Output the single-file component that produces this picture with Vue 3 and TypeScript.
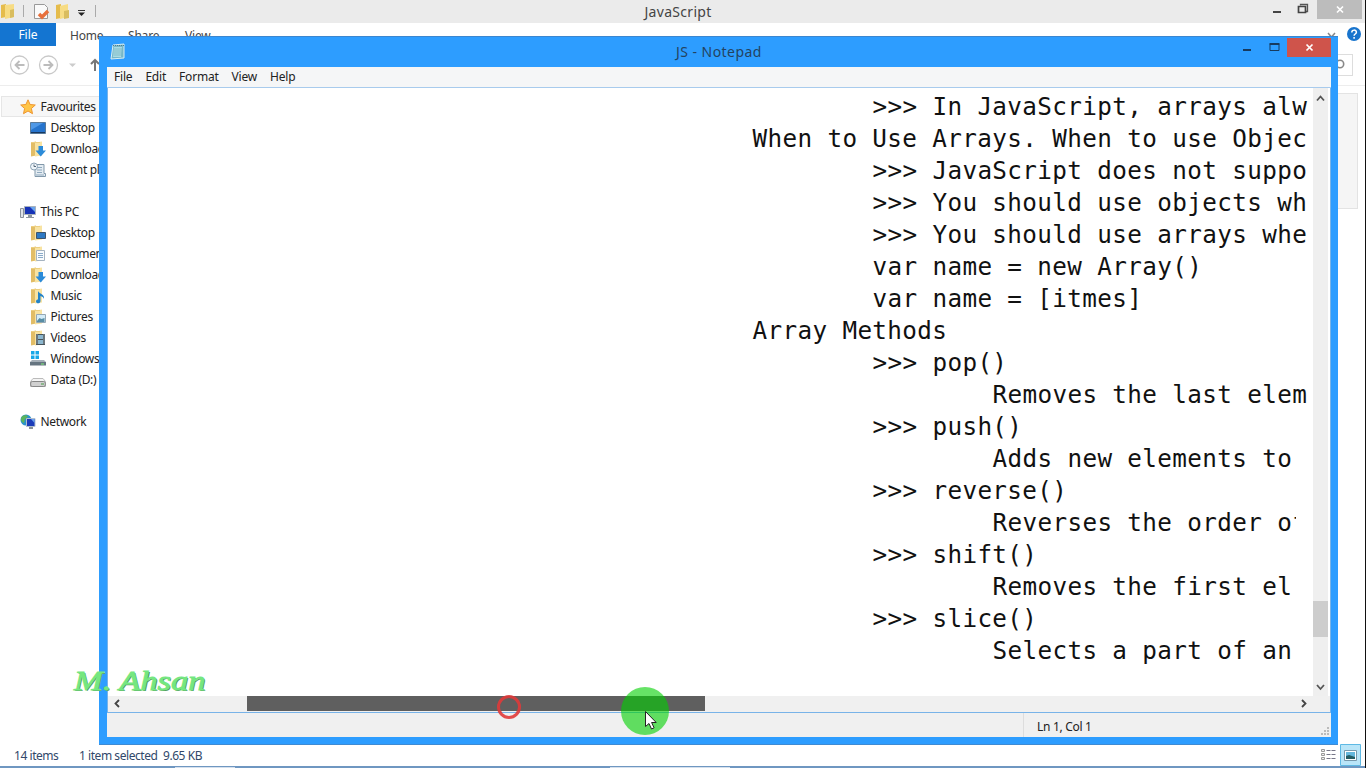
<script setup lang="ts">
interface NavItem {
  label: string
  icon: string
  root?: boolean
  gap?: boolean
  active?: boolean
}
interface Line {
  indent: number
  text: string
  narrow?: boolean
}

const nav: NavItem[] = [
  { label: 'Favourites', icon: 'star', root: true, active: true },
  { label: 'Desktop', icon: 'screen' },
  { label: 'Downloads', icon: 'download' },
  { label: 'Recent places', icon: 'recent' },
  { label: 'This PC', icon: 'pc', root: true, gap: true },
  { label: 'Desktop', icon: 'fdesktop' },
  { label: 'Documents', icon: 'document' },
  { label: 'Downloads', icon: 'download' },
  { label: 'Music', icon: 'music' },
  { label: 'Pictures', icon: 'picture' },
  { label: 'Videos', icon: 'video' },
  { label: 'Windows (C:)', icon: 'windrive' },
  { label: 'Data (D:)', icon: 'drive' },
  { label: 'Network', icon: 'network', root: true, gap: true },
]
const folderIcons = ['download', 'fdesktop', 'document', 'music', 'picture', 'video']

const lines: Line[] = [
  { indent: 1, text: '>>> In JavaScript, arrays alw' },
  { indent: 0, text: 'When to Use Arrays. When to use Objec' },
  { indent: 1, text: '>>> JavaScript does not suppo' },
  { indent: 1, text: '>>> You should use objects wh' },
  { indent: 1, text: '>>> You should use arrays whe' },
  { indent: 1, text: 'var name = new Array()' },
  { indent: 1, text: 'var name = [itmes]' },
  { indent: 0, text: 'Array Methods' },
  { indent: 1, text: '>>> pop()' },
  { indent: 2, text: 'Removes the last elem' },
  { indent: 1, text: '>>> push()' },
  { indent: 2, text: 'Adds new elements to' },
  { indent: 1, text: '>>> reverse()' },
  { indent: 2, text: 'Reverses the order of', narrow: true },
  { indent: 1, text: '>>> shift()' },
  { indent: 2, text: 'Removes the first el' },
  { indent: 1, text: '>>> slice()' },
  { indent: 2, text: 'Selects a part of an' },
]
</script>

<template>
  <div class="desktop">
    <section class="explorer">
      <header class="ex-title">
        <svg class="quick" width="100" height="23" viewBox="0 0 100 23">
          <path d="M1 5l5-1v13l-5 1z" fill="#e5bc4c" /><path d="M5 5l9-1v13l-9 2z" fill="#f7dc83" /><path d="M10 10l4-1v8l-4 1z" fill="#d9bd5f" />
          <path d="M23.500 5v12M95.500 5v12" stroke="#aaa" />
          <path d="M34.500 4.500h10l3 3v11h-13z" fill="#fafafa" stroke="#999" /><path d="M39 14l3 3 6-6" fill="none" stroke="#e8703c" stroke-width="3.500" />
          <path d="M56 5l5-1v14l-5 1z" fill="#e5bc4c" /><path d="M60 6l8-2v13l-8 2z" fill="#f7dc83" /><path d="M64 11l5-1v8l-5 1z" fill="#d9bd5f" />
          <path d="M78 10.500h7" stroke="#333" /><path d="M78 12.500h7l-3.500 3.500z" fill="#222" />
        </svg>
        <span class="ex-name">JavaScript</span>
        <svg class="ex-controls" width="100" height="23" viewBox="0 0 100 23">
          <path d="M7 12h8" stroke="#444" stroke-width="2" />
          <path d="M34.500 5.500v-1h7v7h-2" fill="none" stroke="#555" stroke-width="1.300" /><path d="M32.500 6.500h7v6h-7z" fill="none" stroke="#444" stroke-width="1.700" />
          <path d="M51 0h45v19H51z" fill="#bcbcbc" /><path d="M71 6.500l6 6M77 6.500l-6 6" stroke="#fff" stroke-width="1.700" />
        </svg>
      </header>
      <nav class="ex-tabs">
        <span class="file">File</span><span class="tab home">Home</span><span class="tab share">Share</span><span class="tab view">View</span>
        <svg class="help" width="40" height="23" viewBox="0 0 40 23">
          <path d="M3 10l3.500 4 3.500-4" fill="none" stroke="#888" stroke-width="1.500" />
          <circle cx="29" cy="11" r="7" fill="#1874cd" /><path d="M26.800 9.400c0-3 4.600-3 4.600-.2 0 1.800-2.300 1.800-2.300 3.500M29.100 14v1.700" fill="none" stroke="#fff" stroke-width="1.500" />
        </svg>
      </nav>
      <div class="ex-address">
        <svg width="100" height="39" viewBox="0 0 100 39">
          <g fill="none" stroke="#c9c9c9" stroke-width="1.300"><circle cx="19.500" cy="19" r="9" /><circle cx="48.500" cy="19" r="9" /></g>
          <path d="M24.500 19h-9m4-4l-4 4 4 4M43.500 19h9m-4-4l4 4-4 4" fill="none" stroke="#bcbcbc" stroke-width="1.800" />
          <path d="M69 17.500h7l-3.500 3.500z" fill="#ccc" /><path d="M95 25V14m-4 4l4-4 4 4" fill="none" stroke="#777" stroke-width="2" />
        </svg>
        <div class="search"><svg width="12" height="14" viewBox="0 0 12 14"><circle cx="7" cy="5" r="3.700" fill="none" stroke="#888" stroke-width="1.600" /></svg></div>
      </div>
      <main class="ex-body">
        <ul class="tree">
          <li v-for="(item, i) in nav" :key="i" :class="{ root: item.root, gap: item.gap, active: item.active }">
            <svg width="16" height="16" viewBox="0 0 16 16">
              <template v-if="folderIcons.includes(item.icon)">
                <path d="M1 1.500l5-1v14l-5 1z" fill="#e2bd66" /><path d="M5 1.500l7-1v14l-7 1z" fill="#f8e3a2" /><path d="M1 1.500h9" stroke="#edcf80" />
              </template>
              <path v-if="item.icon === 'star'" d="M8 .8l2.100 4.700 5.200.5-3.900 3.500 1.100 5.200L8 12l-4.500 2.700 1.100-5.200L.7 6l5.200-.5z" fill="#ffc548" stroke="#ee9530" />
              <template v-else-if="item.icon === 'screen'">
                <path d="M.5 2.500h15v11H.5z" fill="#2674cd" stroke="#5a7a99" /><path d="M1 3h12L1 10z" fill="#4f98e6" /><path d="M1 12.500h14" stroke="#18385f" />
              </template>
              <path v-else-if="item.icon === 'download'" d="M8.500 5h4.500v4.500h3L10.700 15.500 5.500 9.500h3z" fill="#2b8bd9" />
              <template v-else-if="item.icon === 'recent'">
                <path d="M5 2.500h9v9h1.500v3H5z" fill="#e4ecf2" stroke="#8198aa" /><path d="M7 5.500h5M7 8h5M7 10.500h5M6 13h8" stroke="#8fa9be" /><circle cx="4" cy="4.500" r="3.500" fill="#eef5fa" stroke="#8ca2b5" /><path d="M4 2.500v2h2" fill="none" stroke="#567" />
              </template>
              <template v-else-if="item.icon === 'pc'">
                <path d="M.5 4.500h3v9h-3z" fill="#dfe3e8" stroke="#8b929c" /><path d="M4.500 2.500h11v8h-11z" fill="#1733b6" stroke="#a9b2bd" /><path d="M10 3h5v5z" fill="#6aa4ee" /><path d="M8 11h4v2h2v1H6v-1h2z" fill="#8d969f" />
              </template>
              <path v-else-if="item.icon === 'fdesktop'" d="M6.500 7.500h9v6h-9z" fill="#2e79c3" stroke="#40556a" />
              <template v-else-if="item.icon === 'document'">
                <path d="M6.500 4.500h8v10h-8z" fill="#f8fbfd" stroke="#a5b3c0" /><path d="M8 7.500h5M8 9.500h5M8 11.500h5" stroke="#8aabc9" />
              </template>
              <path v-else-if="item.icon === 'music'" d="M8 3c1 3 7 3 6 8-.5-2-2-2.500-3.500-3v5c0 3-4.500 3-4.500.5 0-1.500 1-2 2-2z" fill="#2383c9" />
              <template v-else-if="item.icon === 'picture'">
                <path d="M6.500 5.500h9v8h-9z" fill="#d4ecf8" stroke="#96a8b4" /><path d="M7 12l2.500-3 2 1 3-1v4H7z" fill="#588da5" />
              </template>
              <template v-else-if="item.icon === 'video'">
                <path d="M6 4h9v11H6z" fill="#46545c" /><path d="M8 5h5v4H8zM8 10h5v4H8z" fill="#8cb7cf" /><path d="M7 4.500v10M14 4.500v10" stroke="#ddd" stroke-dasharray="1 1" />
              </template>
              <template v-else-if="item.icon === 'windrive'">
                <path d="M1 0h3.500v3.500H1zM5.500 0H9v3.500H5.500zM1 4.500h3.500V8H1zM5.500 4.500H9V8H5.500z" fill="#18a8e8" /><path d="M2 9h12l2 2v3H0v-3z" fill="#a5afb8" /><path d="M0 11h16v3.500H0z" fill="#667581" /><path d="M11 13h3" stroke="#7ff078" />
              </template>
              <template v-else-if="item.icon === 'drive'">
                <path d="M3 6.500h10l2.500 3v5H.5v-5z" fill="#f4f4f4" stroke="#bbb" /><rect x=".7" y="9.500" width="14.600" height="5" rx="1.500" fill="#d0d0d0" stroke="#888" /><path d="M11 12h3" stroke="#4a9e4a" />
              </template>
              <template v-else-if="item.icon === 'network'">
                <circle cx="6" cy="6" r="5.500" fill="#2b91cb" /><path d="M2 2.500c3-2 5-1 6 0L5 5 4 9C1 8 0 5 2 2.500z" fill="#5bb45c" /><path d="M6.500 4.500h8.500v8H6.500z" fill="#1c3cb9" stroke="#b3bfce" /><path d="M11 5h3.500v4z" fill="#6aa4ee" /><path d="M9 13h4v2H9z" fill="#8a9299" />
              </template>
            </svg>
            <span>{{ item.label }}</span>
          </li>
        </ul>
        <div class="preview"></div>
      </main>
      <footer class="ex-status">
        <span class="count">14 items</span><span class="selected">1 item selected</span><span class="size">9.65 KB</span>
        <svg class="views" width="46" height="23" viewBox="0 0 46 23">
          <path d="M21.500 1.500h20v21h-20z" fill="#b9e5f8" stroke="#5eb9e4" />
          <path d="M2.500 6.500h3v2h-3zM2.500 10.500h3v2h-3zM2.500 14.500h3v2h-3z" fill="#eee" stroke="#999" /><path d="M7.500 7.500h4M12.500 7.500h4M7.500 11.500h4M12.500 11.500h4M7.500 15.500h4M12.500 15.500h4" stroke="#778" />
          <path d="M25.500 7.500h12v10h-12z" fill="#fff" stroke="#7799ac" /><path d="M27 9h9v7h-9z" fill="#65b7dc" /><path d="M27 13l3-1 6 2v2h-9z" fill="#255d64" />
        </svg>
      </footer>
      <div class="taskbar"><i></i><i></i></div>
    </section>

    <section class="notepad">
      <header class="np-title">
        <svg class="np-icon" width="16" height="17" viewBox="0 0 16 17">
          <path d="M3 2l11-1v14l-13 1z" fill="#77b7c8" stroke="#d9eef2" /><path d="M4 4h8l-1 10H3z" fill="#a9dce4" /><path d="M4 6h8M4 8h8M3.500 10H12M3.500 12H12" stroke="#73afbd" stroke-width=".7" /><path d="M3 2.500h11" stroke="#557d89" stroke-dasharray="1 1" />
        </svg>
        <span>JS - Notepad</span>
        <svg class="np-controls" width="92" height="21" viewBox="0 0 92 21">
          <path d="M4 13h8" stroke="#173a5e" stroke-width="2" /><path d="M31 7.500h9v6h-9z" fill="none" stroke="#173a5e" /><path d="M30.500 7h10" stroke="#173a5e" stroke-width="2" />
          <path d="M48 1h44v19H48z" fill="#cf544b" /><path d="M67.500 7.500l6 6M73.500 7.500l-6 6" stroke="#fff" stroke-width="1.700" />
        </svg>
      </header>
      <nav class="np-menu"><span>File</span><span>Edit</span><span>Format</span><span>View</span><span>Help</span></nav>
      <div class="np-edit">
        <div class="text-row">
          <div class="page">
            <p v-for="(line, i) in lines" :key="i" :class="['indent' + line.indent, { narrow: line.narrow }]">{{ line.text }}</p>
          </div>
          <div class="vbar">
            <svg width="15" height="18" viewBox="0 0 15 18"><path d="M4 12.500l3.500-4 3.500 4" fill="none" stroke="#555" stroke-width="1.800" /></svg>
            <div class="vthumb"></div>
            <svg width="15" height="15" viewBox="0 0 15 15"><path d="M4 4l3.500 4L11 4" fill="none" stroke="#555" stroke-width="1.800" /></svg>
          </div>
        </div>
        <div class="hbar">
          <svg width="16" height="15" viewBox="0 0 16 15"><path d="M11 4L7.500 7.500 11 11" fill="none" stroke="#444" stroke-width="1.800" /></svg>
          <div class="hthumb"></div>
          <svg class="right-arrow" width="16" height="15" viewBox="0 0 16 15"><path d="M7 4l3.500 3.500L7 11" fill="none" stroke="#444" stroke-width="1.800" /></svg>
        </div>
      </div>
      <footer class="np-status">
        <span>Ln 1, Col 1</span>
        <svg width="11" height="11" viewBox="0 0 11 11"><path d="M7 1h2v2H7zM4 4h2v2H4zM7 4h2v2H7zM1 7h2v2H1zM4 7h2v2H4zM7 7h2v2H7z" fill="#bbb" /></svg>
      </footer>
    </section>

    <span class="signature">M. Ahsan</span>
    <div class="click-ring"></div>
    <div class="click-dot"></div>
    <svg class="pointer" width="14" height="22" viewBox="0 0 14 22"><path d="M1.500 1.500v15l3.500-3 2.500 5.500 2.600-1.200-2.500-5.300h4.600z" fill="#fff" stroke="#222" /></svg>
    <div class="edge"></div>
  </div>
</template>

<style>
body { margin: 0; overflow: hidden; }
</style>
<style scoped>
.desktop { position: relative; width: 1366px; height: 768px; overflow: hidden; background: #fff; font-family: "Noto Sans", "Open Sans", sans-serif; font-size: 12px; letter-spacing: -0.35px; color: #222; }
.explorer { display: flex; flex-direction: column; height: 768px; }
.ex-title { display: flex; justify-content: space-between; height: 23px; background: #ebebeb; }
.ex-name { font-size: 14px; line-height: 23px; letter-spacing: 0.3px; color: #444; width: 68px; margin-left: -9px; white-space: nowrap; }
.ex-title svg { flex: none; }
.ex-tabs { display: flex; height: 23px; line-height: 25px; color: #444; }
.file { width: 56px; text-align: center; background: #1475d1; color: #fff; line-height: 24px; letter-spacing: 0; }
.tab { box-sizing: border-box; width: 58px; padding-left: 14px; letter-spacing: -0.2px; line-height: 26px; }
.tab.view { padding-left: 13px; }
.help { margin-left: auto; margin-right: 1px; }
.ex-address { display: flex; justify-content: space-between; box-sizing: border-box; height: 40px; border-bottom: 1px solid #ededed; }
.search { box-sizing: border-box; width: 20px; height: 22px; margin: 8px 13px 0 0; border: 1px solid #ddd; border-left: 0; }
.search svg { margin-top: 4px; }
.ex-body { display: flex; justify-content: space-between; flex: 1; min-height: 0; padding-top: 8px; }
.tree { box-sizing: border-box; width: 120px; margin: 2px 0 0; padding: 0; list-style: none; }
.tree li { display: flex; align-items: center; box-sizing: border-box; height: 21px; padding-left: 30px; gap: 5px; white-space: nowrap; line-height: 20px; }
.tree li.root { padding-left: 20px; }
.tree li.gap { margin-top: 21px; }
.tree li.active { margin-left: 1px; padding-left: 18px; background: #f7f7f7; border: 1px solid #e6e6e6; }
.tree svg { flex: none; }
.tree span { margin-left: -0.5px; }
.preview { width: 158px; height: 114px; margin-right: 8px; margin-top: -1px; background: #f5f5f5; border: 1px solid #e3e3e3; }
.ex-status { display: flex; height: 23px; line-height: 26px; color: #31486a; letter-spacing: -0.45px; }
.count { width: 65px; padding-left: 14px; }
.selected { width: 84px; }
.views { margin-left: auto; margin-right: 1px; }
.taskbar { display: flex; height: 2px; background: #6f97c1; padding-left: 175px; }
.taskbar i { width: 60px; height: 1px; margin-top: 1px; background: #d5e0ed; }
.taskbar i + i { margin-left: 375px; width: 120px; }

.notepad { position: absolute; left: 99px; top: 36px; width: 1239px; height: 709px; box-sizing: border-box; display: flex; flex-direction: column; padding: 0 7px 7px 8px; background: #2d9dff; border-top: 1px solid #3b86cf; border-bottom: 1px solid #3f8bd3; }
.np-title { display: flex; justify-content: space-between; height: 30px; flex: none; }
.np-icon { margin: 6px 66px 0 3px; }
.np-title span { font-size: 14px; line-height: 29px; letter-spacing: 0.45px; width: 86px; margin-left: 7px; white-space: nowrap; color: #24435f; }
.np-menu { display: flex; gap: 13px; box-sizing: border-box; height: 21px; flex: none; padding-left: 7px; line-height: 20px; letter-spacing: -0.2px; background: #f5f6f7; border-bottom: 1px solid #a8cbed; }
.np-edit { display: flex; flex-direction: column; flex: 1; min-height: 0; border: 1px solid #78b3e8; border-top: 0; background: #fff; }
.text-row { display: flex; flex: 1; min-height: 0; }
.page { width: 1198px; flex: none; padding-top: 3px; font: 24.3px/32px "DejaVu Sans Mono", monospace; letter-spacing: 0.37px; color: #111; }
.page p { height: 32px; margin: 0; white-space: pre; }
.page .indent0 { padding-left: 644.4px; }
.page .indent1 { padding-left: 764.4px; }
.page .indent2 { padding-left: 884.4px; }
.page .narrow { margin-right: 10px; overflow: hidden; }
.vbar { display: flex; flex-direction: column; width: 15px; margin-left: 7px; background: #efefef; }
.vthumb { height: 36px; background: #cdcdcd; margin: 495px 0 auto; flex: none; }
.hbar { display: flex; height: 16px; flex: none; background: #f0f0f0; }
.hthumb { width: 458px; height: 15px; margin-left: 123px; background: #5f5f5f; }
.right-arrow { margin: 0 19px 0 auto; }
.np-status { display: flex; height: 24px; flex: none; background: #f0f0f0; align-items: flex-end; justify-content: flex-end; }
.np-status span { box-sizing: border-box; width: 297px; height: 24px; padding-left: 13px; line-height: 28px; border-left: 1px solid #ddd; letter-spacing: -0.3px; }
.signature { position: absolute; left: 74px; top: 663px; font: italic 26.500px/36px "Liberation Serif", serif; letter-spacing: 0; color: #74e780; -webkit-text-stroke: 0.8px #74e780; text-shadow: 1px 1px 0 #579c62; transform: scaleX(1.3); transform-origin: left; white-space: nowrap; }
.click-ring { position: absolute; left: 497px; top: 695px; width: 18px; height: 18px; border: 3px solid #e03a3a; border-radius: 50%; opacity: .9; }
.click-dot { position: absolute; left: 621px; top: 687px; width: 48px; height: 48px; border-radius: 50%; background: #00d000; opacity: .6; }
.pointer { position: absolute; left: 644px; top: 710px; }
.edge { position: absolute; right: 0; top: 0; width: 1px; height: 768px; background: #111; }
</style>
